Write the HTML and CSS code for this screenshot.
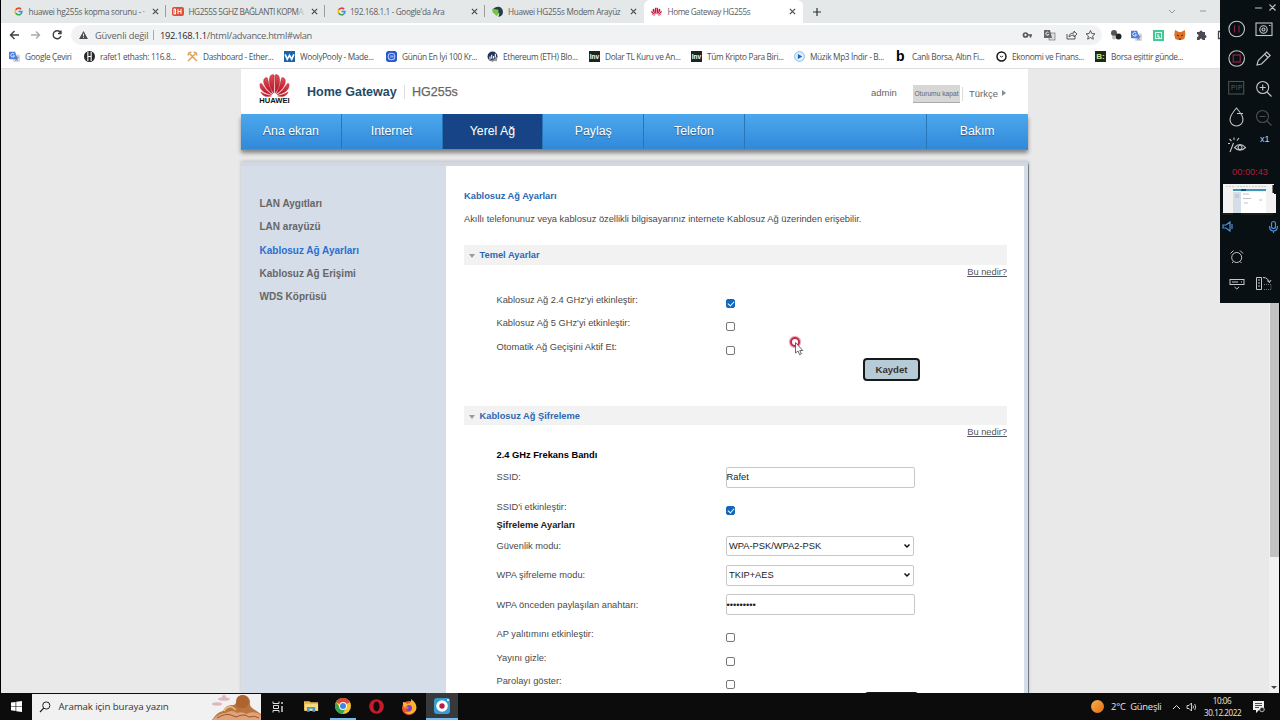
FILE: index.html
```html
<!DOCTYPE html>
<html lang="tr">
<head>
<meta charset="utf-8">
<title>Home Gateway HG255s</title>
<link rel="stylesheet" href="styles.css">
</head>
<body>
<svg class="defs" width="0" height="0">
  <symbol id="google" viewBox="0 0 16 16"><g fill="none" stroke-width="2.8"><path d="M12.6 4A6 6 0 0 0 3 5" stroke="#ea4335"/><path d="M3 5a6 6 0 0 0 0 6" stroke="#fbbc05"/><path d="M3 11a6 6 0 0 0 9 1.500" stroke="#34a853"/><path d="M12 12.500A6 6 0 0 0 14 8H8" stroke="#4285f4"/></g></symbol>
  <symbol id="cross" viewBox="0 0 8 8"><path d="M1 1l6 6M7 1L1 7" stroke="#45494d" stroke-width="1.300"/></symbol>
  <symbol id="translate" viewBox="0 0 16 16"><rect x="6" y="5" width="10" height="11" rx="1" fill="#d5dae0"/><path d="M8 9h6M11 7v2M9 14q4-2 4-5M9 10q1 3 4 4" stroke="#6b7783" fill="none"/><path d="M0 1h9l3 11H1a1 1 0 0 1-1-1z" fill="#4a7fe0"/><path d="M7.500 4.500A2.700 2.700 0 1 0 8 7H5.500" stroke="#fff" stroke-width="1.200" fill="none"/></symbol>
  <symbol id="petals" viewBox="0 0 32 24"><path d="M15.300 20C10 14 9.500 5 12 1.500q3-2 3.600 0z"/><path d="M16.700 20C22 14 22.500 5 20 1.500q-3-2-3.600 0z"/><path d="M14.200 20.800C7 16 3.500 10 5 5.500Q6.500 3 8.500 4q1.500 9 5.700 16.800z"/><path d="M17.800 20.800C25 16 28.500 10 27 5.500Q25.500 3 23.500 4q-1.500 9-5.700 16.800z"/><path d="M13.300 21.800C4 20 0 15.500.8 10.500q.7-1 1.700-.5 4 7 10.800 11.800z"/><path d="M18.700 21.800C28 20 32 15.500 31.200 10.500q-.7-1-1.700-.5-4 7-10.800 11.800z"/><path d="M12.600 23Q4 25 1.800 18.800q4.500 3 10.800 4.200z"/><path d="M19.400 23q8.600 2 10.800-4.200-4.500 3-10.800 4.200z"/></symbol>
</svg>
<div class="screen">
  <div class="tabs">
    <div class="tab t1"><svg class="fav"><use href="#google"/></svg><span class="tt">huawei hg255s kopma sorunu - ·</span><svg class="close"><use href="#cross"/></svg></div>
    <div class="tab t2"><svg class="fav dh" viewBox="0 0 12 9"><rect width="12" height="9" rx="2" fill="#df5037"/><path d="M2 2v5h1.500V2zM6 2v5M6 4.500h3M9 2v5" stroke="#fff" fill="none"/></svg><span class="tt">HG255S 5GHZ BAĞLANTI KOPM<em>A</em></span><svg class="close"><use href="#cross"/></svg></div>
    <div class="tab t3"><svg class="fav"><use href="#google"/></svg><span class="tt">192.168.1.1 - Google'da Ara</span><svg class="close"><use href="#cross"/></svg></div>
    <div class="tab t4"><svg class="fav r" viewBox="0 0 12 12"><path d="M1 7Q0 2 5 1q6-1 7 5 0 5-5 6l1-4z" fill="#283b49"/><path d="M0 3l7 1 0 5-2 2-4-4z" fill="#6ccb3e"/></svg><span class="tt">Huawei HG255s Modem Arayüz</span><svg class="close"><use href="#cross"/></svg></div>
    <div class="tab active"><svg class="fav r" fill="#c8163c"><use href="#petals"/></svg><span class="tt">Home Gateway HG255s</span><svg class="close"><use href="#cross"/></svg></div>
    <svg class="plus" viewBox="0 0 10 10"><path d="M5 1v8M1 5h8" stroke="#333" stroke-width="1.200"/></svg>
    <svg class="winctl" viewBox="0 0 40 10"><path d="M1 4l3 3 3-3M32 5h6" stroke="#999" fill="none"/></svg>
  </div>
  <div class="toolbar">
    <svg class="navs" viewBox="0 0 60 14"><g fill="none" stroke-width="1.400"><path d="M10 7H1.500M5.500 3l-4 4 4 4" stroke="#3c4043"/><path d="M22 7h8.500M27 3.500L30.500 7 27 10.500" stroke="#aaa"/><path d="M51.500 4.500A4 4 0 1 0 52 8M52 2.500v3h-3" stroke="#3c4043"/></g></svg>
    <div class="omni">
      <svg class="warn" viewBox="0 0 10 9"><path d="M5 0l5 9H0z" fill="#4a4d50"/><path d="M5 3v3M5 6.700v1" stroke="#fff"/></svg>
      <span class="unsafe">Güvenli değil</span><i></i><span class="url"><b>192.168.1.1</b>/html/advance.html#wlan</span>
      <svg class="omni-icons" viewBox="0 0 76 14"><g fill="none" stroke="#55595d"><circle cx="3.500" cy="7" r="2" stroke-width="1.700"/><path d="M5 7h5M8.500 7v2.500" stroke-width="1.700"/><path d="M45 6v5h8V8M47 9q0-4 5-4V3l3 3-3 3V7q-3 0-5 2"/><path d="M68.500 2.500l1.300 3 3.200.3-2.400 2.200.7 3.200-2.800-1.700-2.800 1.700.7-3.200L64 5.800l3.200-.3z"/></g><rect x="27" y="5" width="6" height="7" fill="#ddd" stroke="#777" stroke-width=".7"/><path d="M22 2h6l2 8h-8z" fill="#666"/><path d="M26.500 4.500a1.600 1.600 0 1 0 .3 2h-1.300" stroke="#fff" stroke-width=".8" fill="none"/></svg>
    </div>
    <svg class="exts" viewBox="0 0 112 14"><circle cx="4" cy="5" r="3" fill="#555"/><circle cx="8.500" cy="8.500" r="3" fill="#222"/><circle cx="4" cy="9.500" r="2" fill="#bbb"/><use href="#translate" x="21" y="2" width="11" height="11"/><rect x="43" y="2" width="11" height="11" fill="#43c994"/><rect x="45.500" y="4.500" width="6" height="6" fill="none" stroke="#d8fff0"/><path d="M48 6v3h2" stroke="#fff" fill="none"/><path d="M65 2l4 2h2l4-2 .3 5-1 4-3 1h-3l-3-1-1-4z" fill="#dd7328"/><path d="M67 7l2 1M73 7l-2 1M69 11h2" stroke="#4c2a17"/><path d="M87 4h2.500a1.500 1.500 0 1 1 3 0H95v3a1.500 1.500 0 0 1 0 3v2h-2.500a1.500 1.500 0 0 0-3 0H87v-3a1.500 1.500 0 0 0 0-3z" fill="#484c50"/><path d="M112 3.500h-3.500v7h3.500" stroke="#444" fill="none" stroke-width="1.300"/></svg>
  </div>
  <div class="bookmarks">
    <div><svg class="bi"><use href="#translate"/></svg>Google Çeviri</div>
    <div><svg class="bi" viewBox="0 0 10 10"><circle cx="5" cy="5" r="5" fill="#26282a"/><path d="M3.500 1v8M6.500 1v8M3.500 5h3" stroke="#fff"/></svg>rafet1 ethash: 116.8...</div>
    <div><svg class="bi" viewBox="0 0 10 10"><path d="M1 9l7-7M9 9L2 2M1 4q0-3 3-3M6 1q3 0 3 3" stroke="#dda053" stroke-width="1.300" fill="none"/></svg>Dashboard - Ether...</div>
    <div><svg class="bi" viewBox="0 0 10 10"><rect width="10" height="10" fill="#1b65ad"/><path d="M1 3l2 4.500L5 4l2 3.500L9 3" stroke="#fff" fill="none" stroke-width="1.500"/></svg>WoolyPooly - Made...</div>
    <div><svg class="bi" viewBox="0 0 10 10"><rect width="10" height="10" rx="2.500" fill="#2958c7"/><circle cx="5" cy="5" r="3" fill="none" stroke="#b9cdff"/><path d="M3.500 4.500h3v1h-3" stroke="#b9cdff" stroke-width=".7" fill="none"/></svg>Günün En İyi 100 Kr...</div>
    <div><svg class="bi" viewBox="0 0 10 10"><circle cx="5" cy="5" r="4.500" fill="#21325b"/><path d="M2.700 5v3M4.300 3.500V7M6 4.500v2.300M7.600 2.500v3.300" stroke="#fff"/><path d="M1 9Q7 8 9.500 4.500L9 9z" fill="#979695"/></svg>Ethereum (ETH) Blo...</div>
    <div><span class="bi inv">Inv</span>Dolar TL Kuru ve An...</div>
    <div><span class="bi inv">Inv</span>Tüm Kripto Para Biri...</div>
    <div><svg class="bi" viewBox="0 0 10 10"><circle cx="5" cy="5" r="4.500" fill="#e1edf8" stroke="#86b6e0" stroke-width=".8"/><path d="M3.500 2.800L7.500 5l-4 2.200z" fill="#1667b4"/></svg>Müzik Mp3 İndir - B...</div>
    <div><span class="bi bb">b</span>Canlı Borsa, Altın Fi...</div>
    <div><svg class="bi" viewBox="0 0 10 10"><circle cx="5" cy="5" r="4.100" fill="none" stroke="#111" stroke-width="1.300"/><path d="M3.500 4.500L5 5.500l1.500-1" stroke="#111" stroke-width=".8" fill="none"/></svg>Ekonomi ve Finans...</div>
    <div><span class="bi bg">B:</span>Borsa eşittir günde...</div>
  </div>

  <div class="viewport">
    <div class="page">
      <div class="header">
        <div class="logo"><svg viewBox="0 0 32 24"><defs><linearGradient id="red" x1="0" y1="0" x2="0" y2="1"><stop offset="0" stop-color="#e05058"/><stop offset="1" stop-color="#ae0d20"/></linearGradient></defs><use href="#petals" fill="url(#red)" stroke="#c32636" stroke-width=".5"/></svg><span>HUAWEI</span></div>
        <strong class="brand">Home Gateway</strong><span class="model">HG255s</span>
        <span class="user">admin</span><span class="logout">Oturumu kapat</span><span class="lang">Türkçe</span><span class="tri"></span>
      </div>
      <div class="nav">
        <a>Ana ekran</a><a>Internet</a><a class="on">Yerel Ağ</a><a>Paylaş</a><a>Telefon</a><a class="gap"></a><a class="last">Bakım</a>
      </div>
      <div class="main">
        <div class="side">
          <a>LAN Aygıtları</a><a>LAN arayüzü</a><a class="sel">Kablosuz Ağ Ayarları</a><a>Kablosuz Ağ Erişimi</a><a>WDS Köprüsü</a>
        </div>
        <div class="content">
          <h1>Kablosuz Ağ Ayarları</h1>
          <p class="intro">Akıllı telefonunuz veya kablosuz özellikli bilgisayarınız internete Kablosuz Ağ üzerinden erişebilir.</p>
          <h2>Temel Ayarlar</h2>
          <a class="help">Bu nedir?</a>
          <div class="basic">
            <div class="row"><label>Kablosuz Ağ 2.4 GHz'yi etkinleştir:</label><span class="cb on"></span></div>
            <div class="row"><label>Kablosuz Ağ 5 GHz'yi etkinleştir:</label><span class="cb"></span></div>
            <div class="row"><label>Otomatik Ağ Geçişini Aktif Et:</label><span class="cb"></span></div>
          </div>
          <button class="save">Kaydet</button>
          <h2 class="second">Kablosuz Ağ Şifreleme</h2>
          <a class="help">Bu nedir?</a>
          <div class="row band"><strong>2.4 GHz Frekans Bandı</strong></div>
          <div class="row ssid"><label>SSID:</label><span class="input">Rafet</span></div>
          <div class="row en"><label>SSID'i etkinleştir:</label><span class="cb on"></span></div>
          <div class="row enc"><strong>Şifreleme Ayarları</strong></div>
          <div class="row tall"><label>Güvenlik modu:</label><span class="input select">WPA-PSK/WPA2-PSK<svg viewBox="0 0 8 6"><path d="M1.500 1.500L4 4l2.500-2.500" stroke="#111" stroke-width="1.500" fill="none"/></svg></span></div>
          <div class="row tall"><label>WPA şifreleme modu:</label><span class="input select">TKIP+AES<svg viewBox="0 0 8 6"><path d="M1.500 1.500L4 4l2.500-2.500" stroke="#111" stroke-width="1.500" fill="none"/></svg></span></div>
          <div class="row tall"><label>WPA önceden paylaşılan anahtarı:</label><span class="input dots">•••••••••</span></div>
          <div class="extra">
            <div class="row"><label>AP yalıtımını etkinleştir:</label><span class="cb"></span></div>
            <div class="row"><label>Yayını gizle:</label><span class="cb"></span></div>
            <div class="row"><label>Parolayı göster:</label><span class="cb"></span></div>
          </div>
          <div class="cut"></div>
        </div>
      </div>
    </div>
    <div class="scroll"><div class="thumb"></div><span></span></div>
  </div>

  <div class="taskbar">
    <svg class="start" viewBox="0 0 12 12"><path d="M0 1.700L5 1v4.600H0zM5.700.9L12 0v5.600H5.700zM0 6.300h5v4.600l-5-.7zM5.700 6.300H12V12l-6.300-.9z" fill="#fff"/></svg>
    <div class="search">
      <svg class="mag" viewBox="0 0 12 12"><circle cx="7.300" cy="4.500" r="3.600" fill="none" stroke="#222"/><path d="M4.700 7.200L1 11" stroke="#222" stroke-width="1.200"/></svg>
      <span>Aramak için buraya yazın</span>
      <svg class="art" viewBox="0 0 50 26"><g fill="#dfb6bd"><ellipse cx="6" cy="10" rx="5" ry="1.700"/><ellipse cx="13" cy="5" rx="6" ry="1.700"/><circle cx="13" cy="3" r="2"/></g><path d="M1 26q5-8 11-9 3-7 11-6l3-3q-1-6 5-7 8 0 8 8-1 4 5 7l6 4v6z" fill="#b9753f"/><path d="M25 10q-1-8 6-9 6 0 7 7-1 6-6 6-7 0-7-4z" fill="#ad642f"/><path d="M1 26q8-8 14-7 6-4 11 0 6-2 9 1 8-4 15 1v5z" fill="#dfa37b"/><path d="M6 24q8-5 14-3l5 2q8-4 13 0 6-2 10 1" stroke="#9d5429" fill="none"/><path d="M13 17q3-5 8-4l4 3" stroke="#efbd80" fill="none" stroke-width="1.500"/></svg>
    </div>
    <svg class="ti" viewBox="0 0 12 12"><g fill="none" stroke="#ddd"><path d="M1 .5v2h6v-2M1 11.500v-2h6v2M1.500 4.500h5v3h-5z"/><path d="M10 1v2M10 5v6" stroke-width="1.400"/></g></svg>
    <svg class="ti folder" viewBox="0 0 16 13"><path d="M0 1h6l1 1h8v9H0z" fill="#e9b94d"/><path d="M1 4h14v7H1z" fill="#f7dc83"/><path d="M3 7h9v5H9V9H6v3H3z" fill="#4c9ccd"/></svg>
    <div class="open"><svg viewBox="0 0 16 16"><circle cx="8" cy="8" r="8" fill="#f4c531"/><path d="M8 8L1 4A8 8 0 0 1 15 4z" fill="#dc4637"/><path d="M1 4a8 8 0 0 0 6.500 12L11 10 5 10z" fill="#35a354"/><circle cx="8" cy="8" r="3.900" fill="#fff"/><circle cx="8" cy="8" r="3" fill="#4285e6"/></svg></div>
    <svg class="ti opera" viewBox="0 0 16 16"><circle cx="8" cy="8" r="7.800" fill="#c71b2c"/><ellipse cx="8" cy="8" rx="3.300" ry="5.300" fill="#160b0c"/></svg>
    <svg class="ti ff" viewBox="0 0 16 16"><circle cx="8" cy="9" r="7" fill="#ee5831"/><path d="M2 3q3 0 4 2 5-1 4-5 7 5 5 11-5 7-12 2 7 1 8-3Q1 11 2 3z" fill="#ffb32d"/><circle cx="8" cy="9" r="3" fill="#7646c9"/><path d="M3 8q3-1 5 0-1 2-3 2z" fill="#f6772b"/></svg>
    <div class="open rec"><svg viewBox="0 0 16 16"><rect width="16" height="16" rx="3" fill="#369dd3"/><circle cx="8" cy="8" r="5.800" fill="#fff"/><circle cx="8" cy="8" r="2.700" fill="#b91f43"/><circle cx="14" cy="2" r="1" fill="#fff"/></svg></div>
    <div class="tray">
      <span class="sun"></span><span class="weather">2°C&nbsp; Güneşli</span>
      <svg class="trayi" viewBox="0 0 26 12"><path d="M1 8l3.500-3.500L8 8" stroke="#ddd" fill="none"/><path d="M15 4.500h2L19.500 2v8L17 7.500h-2zM21 4.500q1 1.500 0 3M22.700 3q2 3 0 6" stroke="#ddd" fill="none" stroke-width=".9"/></svg>
      <div class="clock">10:06<br>30.12.2022</div>
      <svg class="note" viewBox="0 0 12 12"><path d="M0 0h11v9H6l-3 3V9H0z" fill="#eee"/><path d="M2 2.500h7M2 4.500h7M2 6.500h4" stroke="#222" stroke-width=".8"/><circle cx="9" cy="8.500" r="2.300" fill="#222" stroke="#eee" stroke-width=".7"/></svg>
    </div>
  </div>
</div>

<div class="recorder">
  <div class="rhead"><svg viewBox="0 0 24 10"><path d="M1 5h7M15.500 1.500l6 6M21.500 1.500l-6 6" stroke="#bfc3c4" stroke-width="1.200"/></svg></div>
  <svg class="tools" viewBox="0 0 60 146"><g fill="none" stroke="#c4c8c9" stroke-width="1.100">
    <circle cx="16.700" cy="15" r="7.800"/><path d="M14.500 11.500v7M19 11.500v7" stroke="#8c2444"/>
    <rect x="36" y="9" width="16" height="12.500"/><circle cx="43.500" cy="15.500" r="3.700"/><circle cx="43.500" cy="15.500" r="1.500"/><path d="M49 11.500h1.500"/>
    <circle cx="16.700" cy="44.500" r="7.800"/><rect x="13.200" y="41" width="7" height="7" stroke="#a02449"/>
    <path d="M37 51l1.200-4.500 8.500-8.500 3.500 3.500-8.700 8.500zM44.500 40l3.500 3.500"/>
    <rect x="8.700" y="67.500" width="15" height="12.500" stroke="#4c5052"/>
    <circle cx="42.700" cy="73.500" r="6"/><path d="M47 78l4.500 4.500M39.700 73.500h6M42.700 70.500v6"/>
    <path d="M16.500 94q6.500 7.500 6.500 11.500a6.500 6.500 0 0 1-13 0Q10 101.500 16.500 94zM17 99.500h6"/>
    <g stroke="#4b4f51"><circle cx="42.500" cy="102.500" r="6"/><path d="M47 107l4.500 4.500M39.500 102.500h6"/></g>
    <path d="M10 138l3.500-9M9.500 125l2 2M14 123.500v2.500M19 124l-2 2.500M10 129.500H8M14.500 133.500q5.500-6 11 0-5.500 5.500-11 0z"/><circle cx="20" cy="133.500" r="2"/>
  </g></svg>
  <span class="pip">PIP</span><span class="mult">x1</span>
  <div class="time">00:00:43</div>
  <svg class="preview" viewBox="0 0 53 31"><path d="M0 0h51v10h2v19H0z" fill="#f2f2f2"/><path d="M3 2.500h9M14 2.500h13M29 2.500h14" stroke="#c9cdd0" stroke-dasharray="2 1"/><path d="M10 5h33v2H10z" fill="#3f95b4"/><path d="M18 5h5v2h-5z" fill="#184a7a"/><path d="M10 8h8v21h-8z" fill="#d5dde9"/><path d="M18 8h25v21H18z" fill="#fff"/><path d="M20 10h6M20 14.500h8M21 19h4M36 16h3M12 11h4M12 13h4" stroke="#aab2b8" stroke-width=".8"/><path d="M0 29h10v2H0zM18 29h32v2H18z" fill="#1b1b1b"/><path d="M51 1v8" stroke="#081013" stroke-width="3"/></svg>
  <svg class="lower" viewBox="0 0 60 84"><g fill="none" stroke="#4e8fd8" stroke-width="1.200"><path d="M3 5h3l4-3v9L6 8H3zM12 4v5"/><rect x="51.500" y="1.500" width="4" height="7" rx="2"/><path d="M49.500 6q0 5 4 5t4-5M53.500 11v2"/></g><g fill="none" stroke="#c4c8c9"><circle cx="16.700" cy="37.500" r="5"/><path d="M10.500 33.500l3-3M20 30.500l3 3M12 43l1.500-1.500M21.500 43L20 41.500"/><rect x="10" y="59.500" width="14" height="5"/><path d="M12 62h6M21 62h1M14.500 67l2.300 2 2.300-2M36.500 57.500h5v12h-5zM38 60h2M38 63h2M38 66h2M43 57.500q5 0 6.500 5M47 60.500l2.500 2 1.500-2.500"/><path d="M44 64.500h7v5h-7" stroke-dasharray="1 1" stroke="#777"/></g></svg>
</div>
<svg class="pointer" viewBox="0 0 18 22"><circle cx="7" cy="7" r="4.500" fill="#fff" stroke="#efb2bd" stroke-width="3.500"/><circle cx="7" cy="7" r="4" fill="#fff" stroke="#c02b4b" stroke-width="2"/><path d="M7.500 7.500v10.500l2.500-2 1.600 3.700 1.800-.8-1.600-3.400h3z" fill="#fff" stroke="#444" stroke-width=".8"/></svg>
</body>
</html>
```
FILE: styles.css
```css
* { box-sizing: border-box; }
body { margin: 0; width: 1280px; height: 720px; overflow: hidden; background: #000; font-family: "Liberation Sans", Arial, sans-serif; position: relative; }
.defs { position: absolute; }
svg { display: block; flex: none; }
.screen { margin-left: 1px; width: 1278px; height: 720px; display: flex; flex-direction: column; font-size: 9.3px; }
.tabs, .toolbar, .bookmarks, .taskbar { font-family: "Open Sans", "Noto Sans", sans-serif; }

/* browser chrome */
.tabs { height: 23px; flex: none; background: #e5e8e8; display: flex; align-items: center; font-size: 8.2px; color: #5c6063; }
.tab { height: 23px; width: 159.500px; display: flex; align-items: center; padding-left: 12px; position: relative; }
.tab::after { content: ""; position: absolute; right: 0; top: 5px; height: 12px; width: 1px; background: #9a9c9e; }
.t1 { width: 164.500px; padding-left: 13px; }
.t2 { padding-left: 6.500px; }
.t2 .tt { margin-left: 4.500px; letter-spacing: -.43px; }
.tt em { font-style: normal; opacity: .35; }
.t4::after, .active::after { display: none; }
.active { background: #fff; border-radius: 6px 6px 0 0; width: 159px; padding-left: 7px; }
.active .tt { letter-spacing: -.4px; }
.t3 .tt { letter-spacing: -.36px; margin-left: 4px; }
.t4 { padding-left: 7px; }
.t4 .tt { letter-spacing: -.31px; }
.fav { width: 9px; height: 9px; }
.fav.dh { width: 12px; height: 9px; }
.fav.r { width: 11px; height: 11px; }
.tt { margin-left: 5.500px; white-space: nowrap; letter-spacing: -.26px; }
.close { width: 7px; height: 7px; position: absolute; right: 7px; }
.plus { width: 10px; height: 10px; margin-left: 9px; }
.winctl { width: 40px; height: 10px; margin-left: 346px; margin-top: -2px; }
.toolbar { height: 24px; flex: none; background: #fff; display: flex; align-items: center; }
.navs { width: 60px; height: 14px; margin-left: 8px; }
.omni { width: 1031px; height: 20px; border-radius: 10px; background: #f0f2f3; display: flex; align-items: center; margin-left: 2px; padding-left: 8px; color: #5f6367; font-size: 9.3px; }
.warn { width: 9px; height: 8px; }
.unsafe { width: 54px; margin-left: 7px; letter-spacing: -.18px; white-space: nowrap; }
.omni i { width: 1px; height: 10px; background: #aaa; margin: 0 6.500px 0 3.500px; }
.url { letter-spacing: -.28px; white-space: nowrap; }
.url b { font-weight: 400; color: #25282a; }
.omni-icons { width: 76px; height: 14px; margin-left: auto; margin-right: 4px; }
.exts { width: 112px; height: 14px; margin-left: 8px; }
.bookmarks { height: 22px; flex: none; background: #fff; border-bottom: 1px solid #dcdee0; display: grid; grid-template-columns: 75px 103px 97px 102px 101px 102px 102px 103px 102px 100px 99px 110px; padding: 0 0 3px 8px; align-items: center; font-size: 8.3px; letter-spacing: -.34px; color: #4b4f52; white-space: nowrap; }
.bookmarks > div { display: flex; align-items: center; }
.bi { width: 11px; height: 11px; margin-right: 5px; letter-spacing: 0; }
.inv { background: #222; color: #fff; font: bold 6.5px/11px "Liberation Sans", sans-serif; text-align: center; }
.bb { color: #000; font: bold 14px/11px "Liberation Sans", sans-serif; }
.bg { background: #1c2a16; color: #cde58d; font: bold 8px/11px "Liberation Sans", sans-serif; text-align: center; }

/* gateway page */
.viewport { height: 624px; flex: none; overflow: hidden; background: #e9e9e9; display: flex; }
.page { width: 788px; margin-left: 240px; }
.header { height: 45px; background: #fff; display: flex; width: 787px; white-space: nowrap; color: #666; }
.logo { width: 31px; margin: 5px 0 0 18px; display: flex; flex-direction: column; align-items: center; }
.logo svg { width: 31px; height: 23px; }
.logo span { font: bold 7.600px/8px "Liberation Sans", sans-serif; color: #111; letter-spacing: 0; }
.brand { color: #214c68; font-size: 12.500px; line-height: 47px; margin-left: 17px; width: 89px; }
.model { font-size: 12.500px; line-height: 14px; height: 14px; margin-top: 16px; border-left: 1px solid #ddd; padding-left: 7px; margin-left: 8px; width: 60px; -webkit-text-stroke: .25px #666; }
.user { margin-left: 407px; width: 42px; line-height: 48px; font-size: 9.500px; }
.logout { background: #d7d7d7; border-bottom: 1px solid #aaa; color: #666; font-size: 6.700px; line-height: 17px; width: 47px; height: 18px; margin-top: 16px; text-align: center; }
.lang { border-left: 1px solid #ddd; margin: 18px 0 0 2px; padding-left: 6px; height: 14px; line-height: 14px; font-size: 9.500px; }
.tri { border: 3px solid transparent; border-left: 4px solid #7f8c99; width: 0; height: 0; margin: 21px 0 0 4px; }
.nav { height: 35px; width: 787px; display: flex; background: linear-gradient(#4ca8ed, #3189d9); box-shadow: 0 4px 4px #858585, 0 1px 0 #3479b3; color: #fff; font-size: 12.300px; line-height: 34px; text-align: center; text-shadow: 0 1px 1px #295d8c; }
.nav a { width: 100.800px; border-right: 1px solid #2875b8; }
.nav .on { background: #164487; }
.nav .gap { width: 182.500px; }
.nav .last { border: 0; padding-right: 1px; }
.main { margin-top: 13px; height: 532px; display: flex; background: #d5dde9; border-top: 4px solid #d2d7e1; border-right: 1px solid #72797f; box-shadow: 0 -1px 3px #bbc0ca; }
.side { width: 205px; padding: 26px 0 0 18.500px; display: flex; flex-direction: column; font-weight: bold; font-size: 10px; line-height: 23.300px; color: #666; }
.side .sel { color: #2c6fd0; }
.content { width: 578px; background: #fff; padding: 23.500px 17px 0 18px; color: #4a4a4a; font-size: 9.300px; }
h1, h2, p { margin: 0; }
h1 { font-size: 9.300px; line-height: 12px; color: #2c68b5; }
.intro { margin-top: 11.500px; line-height: 12px; white-space: nowrap; }
h2 { margin-top: 20px; height: 19.500px; background: #f2f2f2; color: #2c68b5; font-size: 9.300px; line-height: 20.500px; padding-left: 15.500px; position: relative; }
h2::before { content: ""; position: absolute; left: 5px; top: 9px; border: 3.500px solid transparent; border-top: 4px solid #9b9b9b; border-bottom: 0; }
.help { display: block; text-align: right; text-decoration: underline; line-height: 12px; height: 12px; margin-top: 1px; color: #555; }
.row { display: grid; grid-template-columns: 229px 190px; align-items: center; height: 23.330px; padding-left: 32.500px; white-space: nowrap; }
.row strong { color: #222; }
.basic { margin-top: 11px; }
.cb { width: 9px; height: 9px; border: 1px solid #777; border-radius: 2px; background: #fff; margin-top: 7px; position: relative; }
.cb.on { background: #1268bd; border-color: #1268bd; }
.cb.on::after { content: ""; position: absolute; left: 2px; top: 0; width: 3px; height: 5px; border: solid #fff; border-width: 0 1.300px 1.300px 0; transform: rotate(42deg); }
.save { display: block; margin-left: 399px; width: 57px; height: 23px; border: 2px solid #17191a; border-radius: 4px; background: #b7cbd7; color: #333; font: bold 9.600px/17px "Liberation Sans", sans-serif; padding: 0; }
.second { margin-top: 24.500px; }
.band { margin-top: 7px; height: 20px; }
.row.band strong { color: #000; }
.ssid { height: 24px; }
.en { margin-top: 6px; height: 23px; }
.enc { height: 13px; }
.tall { height: 29.300px; }
.input { display: flex; align-items: center; height: 20.500px; width: 189px; border: 1px solid #c8c8c8; border-radius: 2px; color: #222; }
.select { width: 188px; padding-left: 2.500px; }
.select svg { width: 8px; height: 6px; margin-left: auto; margin-right: 2px; }
.dots { font-size: 9.300px; }
.extra { margin-top: 3.200px; }
.cut { position: relative; margin: -.500px 0 0 401px; width: 53px; height: 23px; background: #171717; border-radius: 3px; }
.scroll { margin-left: auto; width: 10px; background: #f1f1f1; display: flex; flex-direction: column; align-items: center; }
.thumb { width: 9px; height: 478px; margin-top: 10px; background: #c2c2c2; }
.scroll span { border: 3px solid transparent; border-top: 3px solid #444; border-bottom: 0; margin-top: auto; margin-bottom: 4px; }

/* taskbar */
.taskbar { height: 27px; margin-left: -1px; width: 1280px; flex: none; background: #0c0c0c; display: flex; align-items: center; color: #e5e5e5; }
.start { width: 11px; height: 11px; margin-left: 10.500px; }
.search { margin-left: 10.500px; width: 229px; height: 26px; background: #f1f1f1; color: #333; display: flex; align-items: center; font-size: 9.700px; letter-spacing: -.1px; white-space: nowrap; }
.mag { width: 12px; height: 12px; margin-left: 7px; }
.search span { margin-left: 7.500px; width: 152px; }
.art { width: 50px; height: 26px; }
.ti { width: 12px; height: 12px; margin-left: 11px; }
.folder { width: 15px; height: 13px; margin-left: 20px; }
.open { margin-left: 11px; width: 26px; height: 27px; border-bottom: 2px solid #76b9ed; display: grid; place-items: center; }
.open svg { width: 16px; height: 16px; }
.opera { width: 15px; height: 15px; margin-left: 13px; }
.ff { width: 16px; height: 16px; margin-left: 17px; }
.rec { width: 32px; margin-left: 9px; background: #37393b; }
.tray { margin-left: auto; display: flex; align-items: center; width: 189px; white-space: nowrap; }
.sun { width: 13px; height: 13px; border-radius: 50%; background: linear-gradient(135deg, #f9b04a, #e46c18); }
.weather { margin-left: 7px; width: 60px; font-size: 9.400px; letter-spacing: -.2px; }
.trayi { width: 26px; height: 12px; margin-left: 1px; }
.clock { width: 36px; margin-left: 6px; font-size: 8.100px; line-height: 12px; letter-spacing: -.4px; text-align: center; display: block; }
.note { width: 12px; height: 12px; margin-left: 13px; }

/* floating recorder panel and pointer */
.recorder { position: absolute; left: 1220px; top: 0; width: 60px; height: 303px; background: #081013; }
.rhead { height: 14px; padding: 3px 0 0 34px; }
.rhead svg { width: 24px; height: 10px; }
.tools { width: 60px; height: 146px; }
.pip { position: absolute; left: 11px; top: 83px; font-size: 6.500px; line-height: 10px; color: #5a5e60; letter-spacing: .4px; }
.mult { position: absolute; left: 40px; top: 133px; color: #d0d3d4; font-size: 9px; line-height: 12px; }
.time { height: 24px; padding-top: 5px; font-size: 9.200px; line-height: 14px; text-align: center; color: #b01e3d; }
.preview { margin: 0 0 5px 3px; width: 53px; height: 31px; }
.lower { width: 60px; height: 84px; }
.pointer { position: absolute; left: 788px; top: 335px; width: 18px; height: 22px; }
```
